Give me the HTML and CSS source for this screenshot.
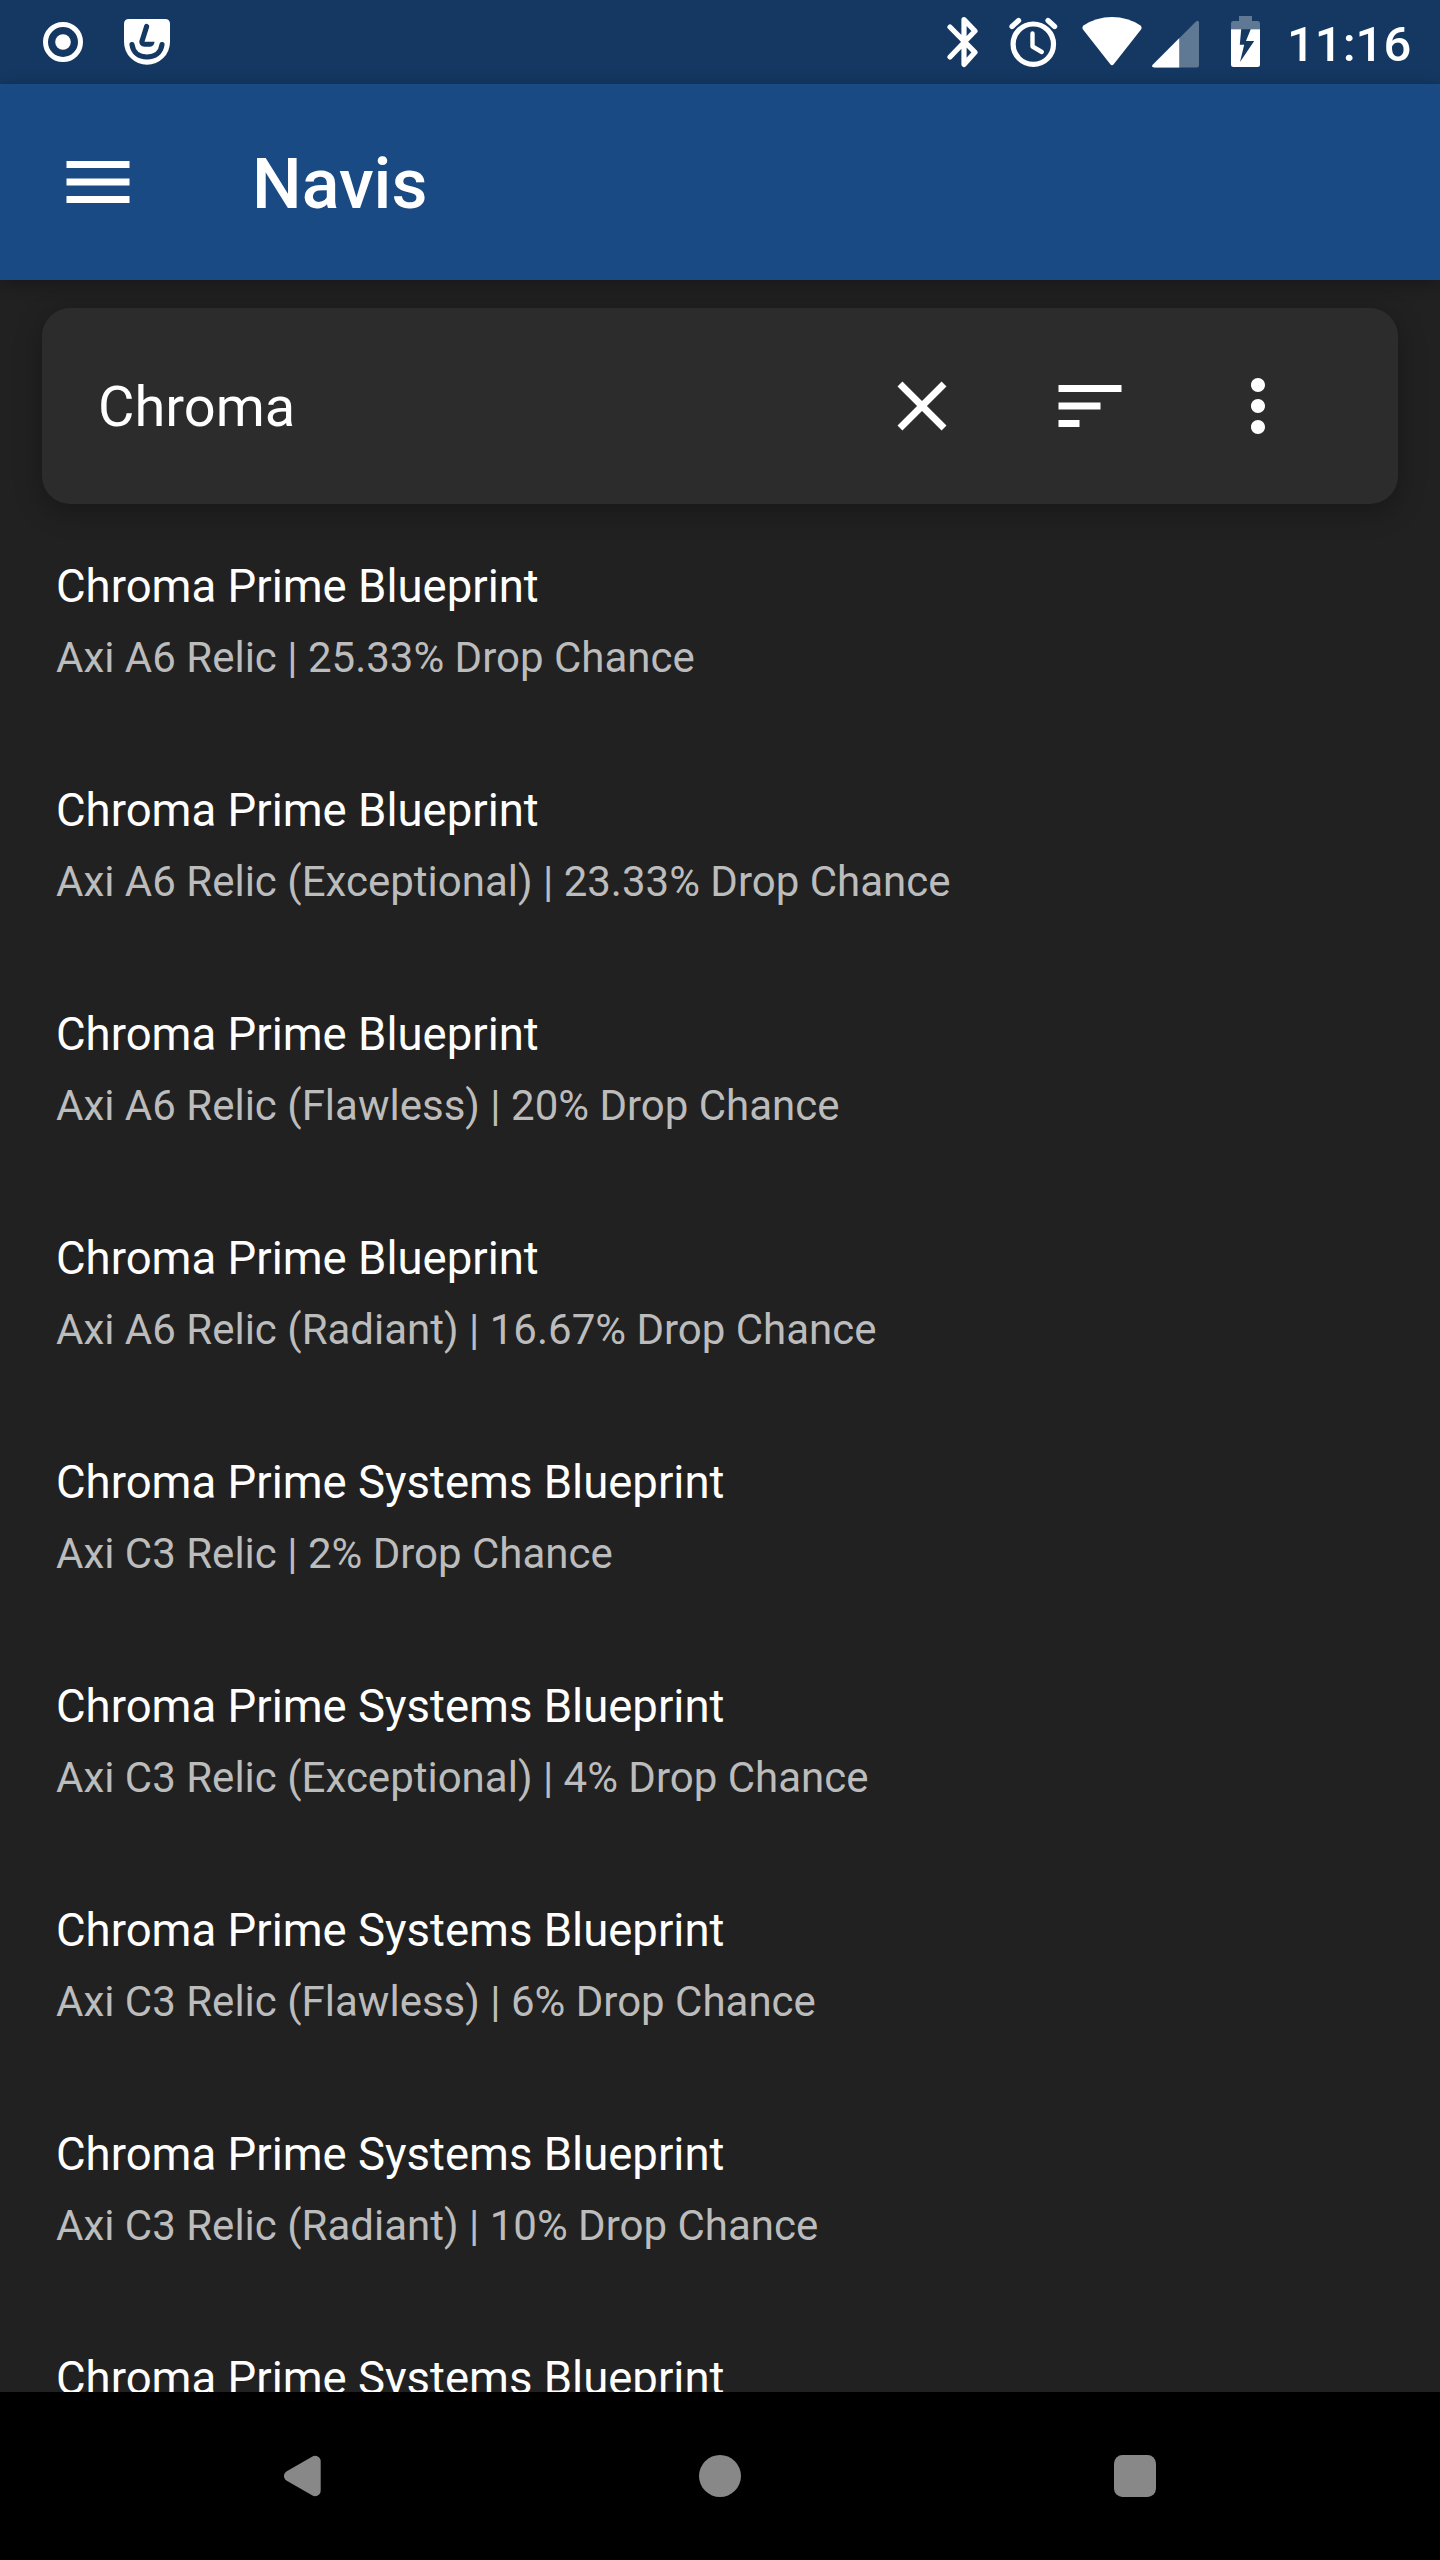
FILE: index.html
```html
<!DOCTYPE html>
<html lang="en">
<head>
<meta charset="utf-8">
<title>Navis</title>
<link rel="stylesheet" href="styles.css">
</head>
<body>
<div class="screen">
  <div class="status-bar">
    <div class="notifications">
      <svg class="icon-cast" viewBox="0 0 42 42"><circle cx="21" cy="21" r="17.5" fill="none" stroke="#fff" stroke-width="5"/><circle cx="21" cy="21" r="7.8" fill="#fff"/></svg>
      <svg class="icon-mask" viewBox="0 0 46 46"><path d="M5 0H41Q46 0 46 5V23A23 22.7 0 0 1 0 23V5Q0 0 5 0Z" fill="#fff"/><path d="M8 25.500C9 33.500 15 38 23 38S37 33.500 38 25.500" fill="none" stroke="#143862" stroke-width="5.200" stroke-linecap="round"/><path d="M20.400 5.900Q21.700 4.500 23.500 5Q25.700 6 25.200 8L20.500 22.800H30.600Q30 27.800 25.300 27.800H20.500Q14.900 26.900 15.300 22.200Z" fill="#143862"/></svg>
    </div>
    <div class="system-icons">
      <svg class="icon-bluetooth" viewBox="0 0 32 52"><path d="M3 11L28 36.300L17 48.400V3.600L28 15L3 41" fill="none" stroke="#fff" stroke-width="5.200" stroke-linecap="round" stroke-linejoin="round"/></svg>
      <svg class="icon-alarm" viewBox="0 0 50 52"><g fill="none" stroke="#fff" stroke-linecap="round"><circle cx="24.300" cy="28.200" r="20.200" stroke-width="5.200"/><path d="M23.500 17.500V30.500L32.800 36" stroke-width="4.400" stroke-linejoin="round"/><path d="M3 10.500L9.600 4.500M45.600 10.500L39 4.500" stroke-width="5.200"/></g></svg>
      <svg class="icon-wifi" viewBox="0 0 60 50"><path d="M1 13.500Q-.5 11.500 1.500 9.500Q14 1 30 1T58.500 9.500Q60.500 11.500 59 13.500L31.500 48.500Q30 50 28.500 48.500Z" fill="#fff"/></svg>
      <svg class="icon-signal" viewBox="0 0 48 48"><path d="M43.500 2Q47 -1 47 3V45.500Q47 47.500 45 47.500H2.500Q-1.500 47.500 1 44.500Z" fill="#fff" fill-opacity=".32"/><path d="M27.200 18.200V47.500H2.500Q-1.500 47.500 1 44.500Z" fill="#fff"/></svg>
      <svg class="icon-battery" viewBox="0 0 29 51"><path d="M8 0H21V5H26.500Q29 5 29 7.500V13.300H0V7.500Q0 5 2.500 5H8Z" fill="#fff" fill-opacity=".32"/><path fill-rule="evenodd" d="M0 13.300H29V48.500Q29 51 26.500 51H2.500Q0 51 0 48.500ZM10.200 13.300L8.800 28.700H13.200L9 46L23.200 25H15L19.700 13.300Z" fill="#fff"/></svg>
      <time class="clock">11:16</time>
    </div>
  </div>

  <header class="app-bar">
    <svg class="icon" viewBox="0 0 24 24"><path d="M3 18h18v-2H3v2zm0-5h18v-2H3v2zm0-7v2h18V6H3z"/></svg>
    <h1 class="app-title">Navis</h1>
  </header>

  <main class="content">
    <div class="search-card">
      <div class="search-text">Chroma</div>
      <svg class="icon" viewBox="0 0 24 24"><path d="M19 6.410L17.590 5 12 10.590 6.410 5 5 6.410 10.590 12 5 17.590 6.410 19 12 13.410 17.590 19 19 17.590 13.410 12z"/></svg>
      <svg class="icon" viewBox="0 0 24 24"><path d="M3 18h6v-2H3v2zM3 6v2h18V6H3zm0 7h12v-2H3v2z"/></svg>
      <svg class="icon" viewBox="0 0 24 24"><path d="M12 8c1.100 0 2-.9 2-2s-.9-2-2-2-2 .9-2 2 .9 2 2 2zm0 2c-1.100 0-2 .9-2 2s.9 2 2 2 2-.9 2-2-.9-2-2-2zm0 6c-1.100 0-2 .9-2 2s.9 2 2 2 2-.9 2-2-.9-2-2-2z"/></svg>
    </div>
    <ul class="results">
      <li class="result"><div class="name">Chroma Prime Blueprint</div><div class="detail">Axi A6 Relic | 25.33% Drop Chance</div></li>
      <li class="result"><div class="name">Chroma Prime Blueprint</div><div class="detail">Axi A6 Relic (Exceptional) | 23.33% Drop Chance</div></li>
      <li class="result"><div class="name">Chroma Prime Blueprint</div><div class="detail">Axi A6 Relic (Flawless) | 20% Drop Chance</div></li>
      <li class="result"><div class="name">Chroma Prime Blueprint</div><div class="detail">Axi A6 Relic (Radiant) | 16.67% Drop Chance</div></li>
      <li class="result"><div class="name">Chroma Prime Systems Blueprint</div><div class="detail">Axi C3 Relic | 2% Drop Chance</div></li>
      <li class="result"><div class="name">Chroma Prime Systems Blueprint</div><div class="detail">Axi C3 Relic (Exceptional) | 4% Drop Chance</div></li>
      <li class="result"><div class="name">Chroma Prime Systems Blueprint</div><div class="detail">Axi C3 Relic (Flawless) | 6% Drop Chance</div></li>
      <li class="result"><div class="name">Chroma Prime Systems Blueprint</div><div class="detail">Axi C3 Relic (Radiant) | 10% Drop Chance</div></li>
      <li class="result"><div class="name">Chroma Prime Systems Blueprint</div></li>
    </ul>
  </main>

  <nav class="nav-bar">
    <svg class="nav-icon" viewBox="0 0 42 42"><path d="M32.200 6.300V35.700L6.500 21Z" stroke="#888" stroke-width="11" stroke-linejoin="round"/></svg>
    <svg class="nav-icon" viewBox="0 0 42 42"><circle cx="21" cy="21" r="21"/></svg>
    <svg class="nav-icon" viewBox="0 0 42 42"><rect width="42" height="42" rx="8.500"/></svg>
  </nav>
</div>
</body>
</html>
```
FILE: styles.css
```css
* { box-sizing: border-box; }

body {
  margin: 0;
  background: #212121;
  color: #fff;
  font-family: Roboto, "Noto Sans", sans-serif;
}

svg { display: block; flex: none; }

.screen {
  display: flex;
  flex-direction: column;
  width: 1440px;
  height: 2560px;
  overflow: hidden;
}

.status-bar {
  display: flex;
  justify-content: space-between;
  flex: none;
  height: 84px;
  padding: 0 30px 0 42px;
  background: #143862;
}

.notifications { display: flex; align-items: center; gap: 40px; }
.icon-cast { width: 42px; height: 42px; }
.icon-mask { width: 46px; height: 46px; }

.system-icons { display: flex; align-items: flex-start; padding-top: 16px; }
.icon-bluetooth { width: 32px; height: 52px; margin-right: 30px; }
.icon-alarm { width: 50px; height: 52px; margin-right: 23px; }
.icon-wifi { width: 60px; height: 50px; margin-right: 10px; }
.icon-signal { width: 48px; height: 48px; margin: 4px 31px 0 0; }
.icon-battery { width: 29px; height: 51px; margin-right: 27px; }
.clock { width: 123px; font-size: 49px; font-weight: 500; line-height: 57px; white-space: nowrap; }

.app-bar {
  position: relative;
  z-index: 1;
  display: flex;
  align-items: center;
  flex: none;
  height: 196px;
  padding: 0 56px;
  background: #1a4a84;
  box-shadow: 0 4px 16px rgba(0, 0, 0, .3);
}

.icon { width: 84px; height: 84px; fill: #fff; }

.app-title {
  margin: 0 0 0 112px;
  padding-top: 4px;
  font-size: 70px;
  font-weight: 500;
  line-height: 82px;
}

.content { flex: 1; min-height: 0; overflow: hidden; padding-top: 28px; }

.search-card {
  display: flex;
  align-items: center;
  gap: 84px;
  height: 196px;
  margin: 0 42px;
  padding: 0 98px 0 56px;
  border-radius: 28px;
  background: #2c2c2c;
  box-shadow: 0 7px 28px rgba(0, 0, 0, .3);
}

.search-text { flex: 1; padding-top: 2px; font-size: 56px; line-height: 66px; }

.results { margin: 0; padding: 28px 0 0; list-style: none; }

.result {
  display: flex;
  flex-direction: column;
  gap: 20px;
  height: 224px;
  padding: 28px 56px 0;
  white-space: nowrap;
}

.name { font-size: 45.5px; line-height: 53px; }
.detail { color: #bcbcbc; font-size: 42px; line-height: 49px; }

.nav-bar {
  display: flex;
  justify-content: space-between;
  align-items: center;
  flex: none;
  height: 168px;
  padding: 0 284px 0 283px;
  background: #000;
}

.nav-icon { width: 42px; height: 42px; fill: #888; }
```
